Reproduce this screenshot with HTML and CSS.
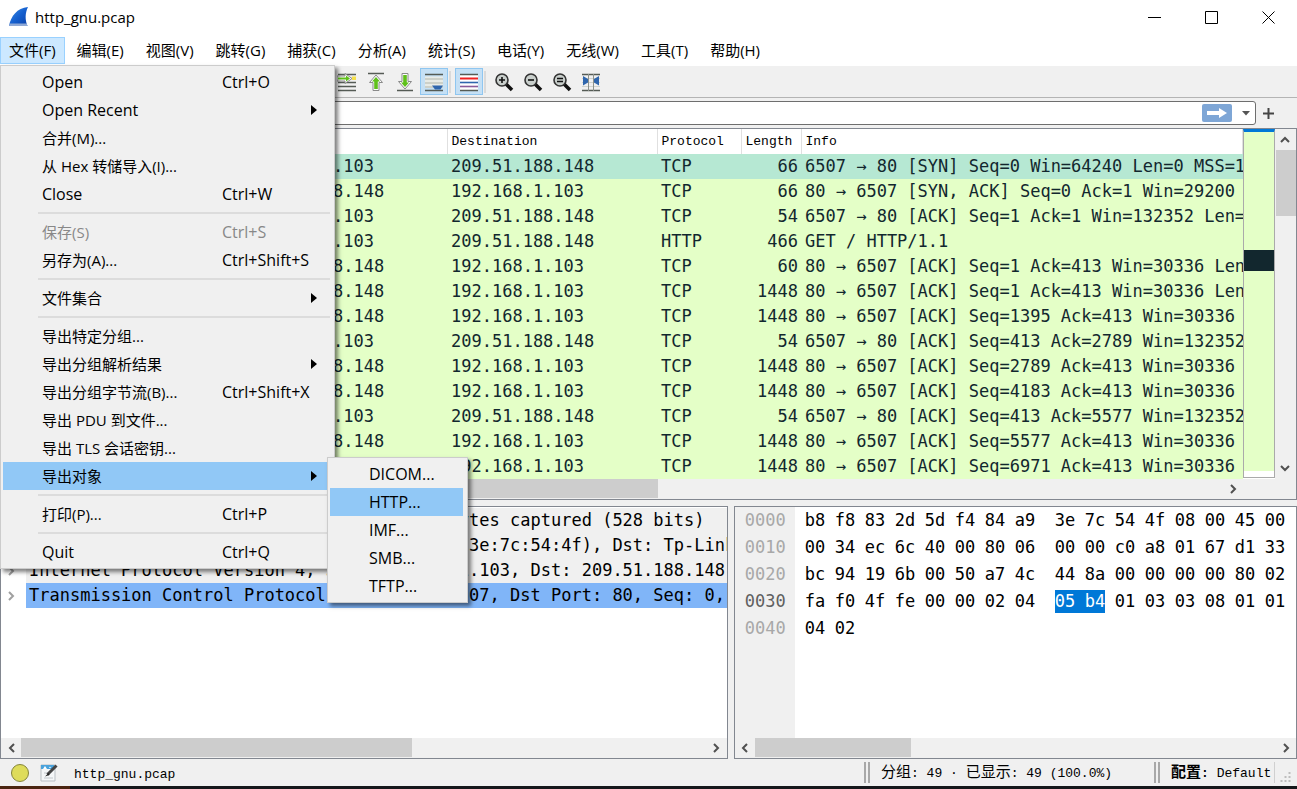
FILE: index.html
```html
<!DOCTYPE html>
<html lang="zh-CN">
  <head>
    <meta charset="UTF-8" />
    <meta name="viewport" content="width=device-width, initial-scale=1.0" />
    <title>http_gnu.pcap</title>
    <link rel="stylesheet" href="styles.css">
  </head>
  <body>
    <header class="titlebar">
      <svg class="logo" width="20" height="20" viewBox="0 0 20 20">
        <defs>
          <linearGradient id="fin" x1="0" y1="0" x2="1" y2="1">
            <stop offset="0" stop-color="#3f8fe6" />
            <stop offset="0.5" stop-color="#1560cf" />
            <stop offset="1" stop-color="#0a3fa6" />
          </linearGradient>
        </defs>
        <path d="M0 19C2 9 8 1 19 0C16 6 16 13 18.500 19Z" fill="url(#fin)" />
        <path d="M0 19C.3 17.500.6 17 1 16.500H17.800L18.500 19Z" fill="#8fa9d6" />
      </svg>
      <h1>http_gnu.pcap</h1>
      <div class="window-buttons">
        <button aria-label="最小化"><svg width="13" height="13" viewBox="0 0 13 13"><path d="M0 6.500H13" /></svg></button>
        <button aria-label="最大化"><svg width="13" height="13" viewBox="0 0 13 13"><path d="M.5.5H12.500V12.500H.5Z" /></svg></button>
        <button aria-label="关闭"><svg width="13" height="13" viewBox="0 0 13 13"><path d="M.5.5L12.500 12.500M12.500.5L.5 12.500" /></svg></button>
      </div>
    </header>

    <nav class="menubar">
      <div class="menu-root">
        <button class="valgt">文件(F)</button>
        <div class="menu">
          <button class="item"><span class="latin">Open</span><kbd>Ctrl+O</kbd></button>
          <button class="item more"><span class="latin">Open Recent</span></button>
          <button class="item"><span>合并(M)...</span></button>
          <button class="item"><span>从 Hex 转储导入(I)...</span></button>
          <button class="item"><span class="latin">Close</span><kbd>Ctrl+W</kbd></button>
          <hr />
          <button class="item" disabled><span>保存(S)</span><kbd>Ctrl+S</kbd></button>
          <button class="item"><span>另存为(A)...</span><kbd>Ctrl+Shift+S</kbd></button>
          <hr />
          <button class="item more"><span>文件集合</span></button>
          <hr />
          <button class="item"><span>导出特定分组...</span></button>
          <button class="item more"><span>导出分组解析结果</span></button>
          <button class="item"><span>导出分组字节流(B)...</span><kbd>Ctrl+Shift+X</kbd></button>
          <button class="item"><span>导出 PDU 到文件...</span></button>
          <button class="item"><span>导出 TLS 会话密钥...</span></button>
          <div class="sub-root">
            <button class="item more active"><span>导出对象</span></button>
            <div class="menu submenu">
              <button class="item latin">DICOM...</button>
              <button class="item latin active">HTTP...</button>
              <button class="item latin">IMF...</button>
              <button class="item latin">SMB...</button>
              <button class="item latin">TFTP...</button>
            </div>
          </div>
          <hr />
          <button class="item"><span>打印(P)...</span><kbd>Ctrl+P</kbd></button>
          <hr />
          <button class="item"><span class="latin">Quit</span><kbd>Ctrl+Q</kbd></button>
        </div>
      </div>
      <button>编辑(E)</button>
      <button>视图(V)</button>
      <button>跳转(G)</button>
      <button>捕获(C)</button>
      <button>分析(A)</button>
      <button>统计(S)</button>
      <button>电话(Y)</button>
      <button>无线(W)</button>
      <button>工具(T)</button>
      <button>帮助(H)</button>
    </nav>

    <div class="toolbar">
      <button aria-label="转到分组">
        <svg width="20" height="20" viewBox="0 0 20 20">
          <path d="M1 2.500H19M1 10.500H19M1 14.500H19M1 18.500H19" stroke="#555b55" stroke-width="1.500" />
          <path d="M15 4.500H19V8H15Z" fill="#f5e04a" />
          <path d="M0 4H8V1.500L15 6.500L8 11.500V9H0Z" fill="#fff" stroke="#8a8a8a" />
          <path d="M1 5.500H9V3.500L13 6.500L9 9.500V7.500H1Z" fill="#5fc01a" />
        </svg>
      </button>
      <button aria-label="首个分组">
        <svg width="18" height="20" viewBox="0 0 18 20">
          <path d="M1 1.500H17" stroke="#555b55" stroke-width="1.500" />
          <path d="M9 3L15.500 10.500H12V18.500H6V10.500H2.500Z" fill="#fff" stroke="#8a8a8a" />
          <path d="M9 5L13 9.500H10.800V17H7.200V9.500H5Z" fill="#5fc01a" />
        </svg>
      </button>
      <button aria-label="最新分组">
        <svg width="18" height="20" viewBox="0 0 18 20">
          <path d="M1 18.500H17" stroke="#555b55" stroke-width="1.500" />
          <path d="M9 17L15.500 9.500H12V1.500H6V9.500H2.500Z" fill="#fff" stroke="#8a8a8a" />
          <path d="M9 15L13 10.500H10.800V3H7.200V10.500H5Z" fill="#5fc01a" />
        </svg>
      </button>
      <button class="pressed" aria-label="自动滚动">
        <svg width="18" height="20" viewBox="0 0 18 20">
          <path d="M0 4.500H18V16H0Z" fill="#e8ebe6" />
          <path d="M0 7H18M0 11H18M0 15H18" stroke="#c2c8c0" stroke-width="1.500" />
          <path d="M0 2.500H18M0 18.500H18" stroke="#555b55" stroke-width="1.500" />
          <path d="M7 13.500H18L15.500 17.500H10Z" fill="#2f66ad" />
        </svg>
      </button>
      <span class="divider"></span>
      <button class="pressed" aria-label="着色">
        <svg width="18" height="20" viewBox="0 0 18 20">
          <path d="M0 3H18V18H0Z" fill="#fff" />
          <path d="M0 2.500H18M0 18.500H18" stroke="#555b55" stroke-width="1.600" />
          <path d="M0 6.500H18" stroke="#ee2222" stroke-width="2" />
          <path d="M0 10.500H18" stroke="#2f66ad" stroke-width="1.600" />
          <path d="M0 14.500H18" stroke="#8a5a9a" stroke-width="1.600" />
        </svg>
      </button>
      <span class="divider"></span>
      <button aria-label="放大">
        <svg width="20" height="20" viewBox="0 0 20 20">
          <path d="M12 12L18 18" stroke="#111" stroke-width="3.600" />
          <circle cx="8" cy="8" r="6" fill="#c9cfcc" stroke="#333" stroke-width="1.600" />
          <path d="M5 8H11M8 5V11" stroke="#111" stroke-width="1.600" />
        </svg>
      </button>
      <button aria-label="缩小">
        <svg width="20" height="20" viewBox="0 0 20 20">
          <path d="M12 12L18 18" stroke="#111" stroke-width="3.600" />
          <circle cx="8" cy="8" r="6" fill="#c9cfcc" stroke="#333" stroke-width="1.600" />
          <path d="M5 8H11" stroke="#111" stroke-width="1.600" />
        </svg>
      </button>
      <button aria-label="普通大小">
        <svg width="20" height="20" viewBox="0 0 20 20">
          <path d="M12 12L18 18" stroke="#111" stroke-width="3.600" />
          <circle cx="8" cy="8" r="6" fill="#c9cfcc" stroke="#333" stroke-width="1.600" />
          <path d="M5 6.500H11M5 9.500H11" stroke="#111" stroke-width="1.500" />
        </svg>
      </button>
      <button aria-label="调整列宽">
        <svg width="18" height="20" viewBox="0 0 18 20">
          <path d="M0 6.500H18M0 10.500H18M0 14.500H18" stroke="#d0d3ce" />
          <path d="M0 2.500H18M0 18.500H18" stroke="#555b55" stroke-width="1.600" />
          <path d="M6.500 2V19M11.500 2V19" stroke="#8d928d" />
          <path d="M1 4L6 7V10.500L1 13.500ZM17 4L12 7V10.500L17 13.500Z" fill="#2f66ad" />
        </svg>
      </button>
    </div>

    <div class="filterbar">
      <div class="filter">
        <input type="text" aria-label="显示过滤器" />
        <button class="apply" aria-label="应用">
          <svg width="22" height="12" viewBox="0 0 22 12"><path d="M1 4H13V1L21 6L13 11V8H1Z" fill="#fff" /></svg>
        </button>
        <button class="recent" aria-label="最近">
          <svg width="8" height="5" viewBox="0 0 8 5"><path d="M0 0H8L4 4.500Z" fill="#555" /></svg>
        </button>
      </div>
      <button class="add" aria-label="添加按钮">
        <svg width="11" height="11" viewBox="0 0 11 11"><path d="M0 5.500H11M5.500 0V11" stroke="#444" stroke-width="2" /></svg>
      </button>
    </div>

    <main>
      <section class="packets">
        <div class="packet-area">
          <div class="packet-list">
            <table>
              <colgroup>
                <col class="c-no"><col class="c-time"><col class="c-address"><col class="c-address"><col class="c-protocol"><col class="c-length"><col>
              </colgroup>
              <thead>
                <tr><th>No.</th><th>Time</th><th>Source</th><th>Destination</th><th>Protocol</th><th>Length</th><th>Info</th></tr>
              </thead>
              <tbody>
                <tr class="current"><td>1</td><td></td><td>192.168.1.103</td><td>209.51.188.148</td><td>TCP</td><td>66</td><td>6507 → 80 [SYN] Seq=0 Win=64240 Len=0 MSS=1460</td></tr>
                <tr><td>2</td><td></td><td>209.51.188.148</td><td>192.168.1.103</td><td>TCP</td><td>66</td><td>80 → 6507 [SYN, ACK] Seq=0 Ack=1 Win=29200 Len=0</td></tr>
                <tr><td>3</td><td></td><td>192.168.1.103</td><td>209.51.188.148</td><td>TCP</td><td>54</td><td>6507 → 80 [ACK] Seq=1 Ack=1 Win=132352 Len=0</td></tr>
                <tr><td>4</td><td></td><td>192.168.1.103</td><td>209.51.188.148</td><td>HTTP</td><td>466</td><td>GET / HTTP/1.1</td></tr>
                <tr><td>5</td><td></td><td>209.51.188.148</td><td>192.168.1.103</td><td>TCP</td><td>60</td><td>80 → 6507 [ACK] Seq=1 Ack=413 Win=30336 Len=0</td></tr>
                <tr><td>6</td><td></td><td>209.51.188.148</td><td>192.168.1.103</td><td>TCP</td><td>1448</td><td>80 → 6507 [ACK] Seq=1 Ack=413 Win=30336 Len=1394</td></tr>
                <tr><td>7</td><td></td><td>209.51.188.148</td><td>192.168.1.103</td><td>TCP</td><td>1448</td><td>80 → 6507 [ACK] Seq=1395 Ack=413 Win=30336 Len=1394</td></tr>
                <tr><td>8</td><td></td><td>192.168.1.103</td><td>209.51.188.148</td><td>TCP</td><td>54</td><td>6507 → 80 [ACK] Seq=413 Ack=2789 Win=132352 Len=0</td></tr>
                <tr><td>9</td><td></td><td>209.51.188.148</td><td>192.168.1.103</td><td>TCP</td><td>1448</td><td>80 → 6507 [ACK] Seq=2789 Ack=413 Win=30336 Len=1394</td></tr>
                <tr><td>10</td><td></td><td>209.51.188.148</td><td>192.168.1.103</td><td>TCP</td><td>1448</td><td>80 → 6507 [ACK] Seq=4183 Ack=413 Win=30336 Len=1394</td></tr>
                <tr><td>11</td><td></td><td>192.168.1.103</td><td>209.51.188.148</td><td>TCP</td><td>54</td><td>6507 → 80 [ACK] Seq=413 Ack=5577 Win=132352 Len=0</td></tr>
                <tr><td>12</td><td></td><td>209.51.188.148</td><td>192.168.1.103</td><td>TCP</td><td>1448</td><td>80 → 6507 [ACK] Seq=5577 Ack=413 Win=30336 Len=1394</td></tr>
                <tr><td>13</td><td></td><td>209.51.188.148</td><td>192.168.1.103</td><td>TCP</td><td>1448</td><td>80 → 6507 [ACK] Seq=6971 Ack=413 Win=30336 Len=1394</td></tr>
              </tbody>
            </table>
          </div>
          <div class="minimap"><div class="minimap-mark"></div></div>
          <div class="scroll-y">
            <button aria-label="向上"><svg width="10" height="7" viewBox="0 0 10 7"><path d="M1 6L5 2L9 6" /></svg></button>
            <div class="track"><div class="thumb"></div></div>
            <button aria-label="向下"><svg width="10" height="7" viewBox="0 0 10 7"><path d="M1 1L5 5L9 1" /></svg></button>
          </div>
        </div>
        <div class="scroll-x scroll-packets">
          <button aria-label="向左"><svg width="7" height="10" viewBox="0 0 7 10"><path d="M6 1L2 5L6 9" /></svg></button>
          <div class="track"><div class="thumb"></div></div>
          <button aria-label="向右"><svg width="7" height="10" viewBox="0 0 7 10"><path d="M1 1L5 5L1 9" /></svg></button>
        </div>
      </section>

      <div class="panes">
        <section class="details">
          <ul>
            <li><svg width="7" height="10" viewBox="0 0 7 10"><path d="M1 1L5 5L1 9" /></svg><span>Frame 1: 66 bytes on wire (528 bits), 66 bytes captured (528 bits)</span></li>
            <li><svg width="7" height="10" viewBox="0 0 7 10"><path d="M1 1L5 5L1 9" /></svg><span>Ethernet II, Src: LCFCHeFe_7c:54:4f (84:a9:3e:7c:54:4f), Dst: Tp-LinkT</span></li>
            <li><svg width="7" height="10" viewBox="0 0 7 10"><path d="M1 1L5 5L1 9" /></svg><span>Internet Protocol Version 4, Src: 192.168.1.103, Dst: 209.51.188.148</span></li>
            <li class="current"><svg width="7" height="10" viewBox="0 0 7 10"><path d="M1 1L5 5L1 9" /></svg><span>Transmission Control Protocol, Src Port: 6507, Dst Port: 80, Seq: 0, Len: 0</span></li>
          </ul>
          <div class="scroll-x scroll-details">
            <button aria-label="向左"><svg width="7" height="10" viewBox="0 0 7 10"><path d="M6 1L2 5L6 9" /></svg></button>
            <div class="track"><div class="thumb"></div></div>
            <button aria-label="向右"><svg width="7" height="10" viewBox="0 0 7 10"><path d="M1 1L5 5L1 9" /></svg></button>
          </div>
        </section>

        <section class="bytes">
          <div class="hex">
            <table>
              <tr><th>0000</th><td>b8</td><td>f8</td><td>83</td><td>2d</td><td>5d</td><td>f4</td><td>84</td><td>a9</td><td>3e</td><td>7c</td><td>54</td><td>4f</td><td>08</td><td>00</td><td>45</td><td>00</td></tr>
              <tr><th>0010</th><td>00</td><td>34</td><td>ec</td><td>6c</td><td>40</td><td>00</td><td>80</td><td>06</td><td>00</td><td>00</td><td>c0</td><td>a8</td><td>01</td><td>67</td><td>d1</td><td>33</td></tr>
              <tr><th>0020</th><td>bc</td><td>94</td><td>19</td><td>6b</td><td>00</td><td>50</td><td>a7</td><td>4c</td><td>44</td><td>8a</td><td>00</td><td>00</td><td>00</td><td>00</td><td>80</td><td>02</td></tr>
              <tr class="current"><th>0030</th><td>fa</td><td>f0</td><td>4f</td><td>fe</td><td>00</td><td>00</td><td>02</td><td>04</td><td><mark class="joined">05</mark></td><td><mark>b4</mark></td><td>01</td><td>03</td><td>03</td><td>08</td><td>01</td><td>01</td></tr>
              <tr><th>0040</th><td>04</td><td>02</td></tr>
            </table>
          </div>
          <div class="scroll-x scroll-bytes">
            <button aria-label="向左"><svg width="7" height="10" viewBox="0 0 7 10"><path d="M6 1L2 5L6 9" /></svg></button>
            <div class="track"><div class="thumb"></div></div>
            <button aria-label="向右"><svg width="7" height="10" viewBox="0 0 7 10"><path d="M1 1L5 5L1 9" /></svg></button>
          </div>
        </section>
      </div>
    </main>

    <footer>
      <div class="status-file">
        <button class="expert" aria-label="专家信息"></button>
        <button aria-label="文件属性">
          <svg width="18" height="18" viewBox="0 0 18 18">
            <path d="M1 1H15V17H1Z" fill="#f4f6f7" stroke="#b9bfc3" />
            <path d="M1 1H14V5H1Z" fill="#4aa3dc" />
            <path d="M3 5L5 2L7 5M9 4L10 2.500L11 4" fill="#fff" />
            <path d="M4 9H8M4 14H13" stroke="#c2c8cc" />
            <path d="M16.500 1.500L7.500 10.500" stroke="#444" stroke-width="3" />
            <path d="M8.500 9L5 12.500L9.500 11Z" fill="#222" />
          </svg>
        </button>
        <span>http_gnu.pcap</span>
      </div>
      <div class="status-part status-packets"><span class="cjk">分组</span>: 49 · <span class="cjk">已显示</span>: 49 (100.0%)</div>
      <div class="status-part status-profile"><b class="cjk">配置</b><b>: </b>Default</div>
      <svg class="grip" width="13" height="13" viewBox="0 0 13 13">
        <path d="M9 1H11V3H9ZM5 5H7V7H5ZM9 5H11V7H9ZM1 9H3V11H1ZM5 9H7V11H5ZM9 9H11V11H9Z" fill="#bdbdbd" />
      </svg>
    </footer>
    <div class="taskbar"></div>
  </body>
</html>
```

FILE: styles.css
```css
* {
  padding: 0;
  margin: 0;
  box-sizing: border-box;
}

body {
  display: flex;
  flex-direction: column;
  height: 100vh;
  overflow: hidden;
  background-color: #f0f0f0;
  color: #000;
  font-family: "Open Sans", "Noto Sans CJK SC", sans-serif;
  font-size: 15px;
}

button {
  border: none;
  background: none;
  color: inherit;
  font: inherit;
}

svg {
  display: block;
  fill: none;
}

/* titlebar */

.titlebar {
  display: flex;
  align-items: center;
  height: 37px;
  padding: 0 0 3px 9px;
  background-color: #fff;
}

h1 {
  flex: 1;
  margin-left: 6px;
  font-size: 15px;
  font-weight: 400;
}

.window-buttons {
  display: flex;
}

.window-buttons button {
  display: grid;
  place-items: center;
  width: 57px;
  height: 34px;
}

.window-buttons svg {
  stroke: #000;
}

/* menubar */

.menubar {
  display: flex;
  gap: 2px;
  height: 29px;
  background-color: #fff;
}

.menubar > button,
.menu-root > button {
  height: 27px;
  padding: 0 9px;
  border: 1px solid transparent;
  line-height: 25px;
  white-space: nowrap;
}

.menu-root,
.sub-root {
  position: relative;
}

.menu-root > .valgt {
  padding: 0 8px;
  background-color: #cce8ff;
  border-color: #99d1ff;
}

.menu {
  position: absolute;
  z-index: 2;
  top: 28px;
  left: 0;
  width: 335px;
  padding: 2px 4px 2px 2px;
  border: 1px solid #ccc;
  background-color: #f0f0f0;
  box-shadow: 3px 3px 4px rgba(0, 0, 0, 0.5);
}

.menu .item {
  display: flex;
  align-items: center;
  position: relative;
  width: 100%;
  height: 28px;
  padding-left: 39px;
  line-height: 28px;
  text-align: left;
  white-space: nowrap;
}

.item span {
  width: 180px;
}

.item kbd {
  font-family: inherit;
}

.item kbd,
.latin {
  font-size: 16px;
}

.item:disabled {
  color: #888;
}

.item.active {
  background-color: #91c8f6;
}

.more::after {
  content: "";
  margin-left: 89px;
  border: 5px solid transparent;
  border-left: 6px solid #000;
  border-right: none;
}

.menu hr {
  height: 2px;
  margin: 4px 0 4px 35px;
  border: none;
  background-color: #dcdcdc;
}

.submenu {
  z-index: 3;
  top: -5px;
  left: 324px;
  width: 141px;
}

/* toolbar */

.toolbar {
  display: flex;
  align-items: center;
  gap: 1px;
  height: 32px;
  padding-left: 333px;
  border-bottom: 1px solid #b4b4b4;
}

.toolbar button {
  display: grid;
  place-items: center;
  width: 28px;
  height: 27px;
}

.toolbar .pressed {
  background-color: #c5e0f5;
  border: 1px solid #8fc6f0;
}

.divider {
  width: 5px;
  height: 22px;
  border-left: 2px solid #dadada;
}

/* display filter */

.filterbar {
  display: flex;
  align-items: center;
  height: 30px;
  padding-left: 30px;
}

.filter {
  display: flex;
  align-items: center;
  flex: 1;
  height: 24px;
  border: 1px solid #6e6e6e;
  border-radius: 3px;
  background-color: #fff;
}

.filter input {
  flex: 1;
  min-width: 0;
  height: 20px;
  border: none;
  outline: none;
  font: inherit;
}

.apply {
  display: grid;
  place-items: center;
  width: 30px;
  height: 18px;
  border-radius: 2px;
  background-color: #7ea6d6;
}

.recent {
  display: grid;
  place-items: center;
  width: 23px;
  padding-left: 5px;
}

.add {
  display: grid;
  place-items: center;
  width: 41px;
  height: 24px;
  padding-right: 16px;
}

/* main panes */

main {
  display: flex;
  flex-direction: column;
  flex: 1;
  min-height: 0;
  gap: 6px;
}

.packets,
.details,
.bytes {
  border: 1px solid #828790;
  background-color: #fff;
}

.packet-area {
  display: flex;
  height: 350px;
}

.packet-list {
  flex: 1;
  min-width: 0;
  overflow: hidden;
}

table {
  border-collapse: collapse;
}

.packet-list table {
  width: 100%;
  table-layout: fixed;
}

.c-no {
  width: 70px;
}

.c-time {
  width: 166px;
}

.c-address {
  width: 210px;
}

.c-protocol {
  width: 84px;
}

.c-length {
  width: 60px;
}

.packet-list th {
  height: 25px;
  padding-left: 4px;
  border-right: 1px solid #e0e0e0;
  font-family: "Liberation Mono", monospace;
  font-size: 13px;
  font-weight: 400;
  text-align: left;
}

.packet-list td {
  height: 25px;
  padding-left: 4px;
  overflow: hidden;
  font-family: "DejaVu Sans Mono", monospace;
  font-size: 17px;
  line-height: 25px;
  white-space: nowrap;
}

.packet-list td:nth-child(6) {
  padding: 0 3px 0 0;
  text-align: right;
}

.packet-list tbody {
  background-color: #e4ffc7;
  color: #12272e;
}

.packet-list .current {
  background-color: #b6e8d3;
}

.minimap {
  width: 32px;
  height: 349px;
  padding-top: 118px;
  border: 1px solid #aaa;
  border-top: 3px solid #0078d7;
  border-bottom: 1px solid #aaa;
  background-color: #e4ffc7;
  box-shadow: inset 0 -6px #fff;
}

.minimap-mark {
  height: 21px;
  background-color: #12272e;
}

/* scrollbars */

.scroll-x,
.scroll-y {
  display: flex;
  background-color: #f0f0f0;
}

.scroll-x {
  height: 20px;
}

.scroll-y {
  flex-direction: column;
  width: 21px;
}

.scroll-x button,
.scroll-y button {
  display: grid;
  place-items: center;
  width: 20px;
  height: 21px;
}

.scroll-x button {
  height: 20px;
}

.scroll-x svg,
.scroll-y svg {
  stroke: #505050;
  stroke-width: 2;
}

.track {
  flex: 1;
}

.thumb {
  background-color: #cdcdcd;
}

.scroll-x .thumb {
  height: 19px;
}

.scroll-y .thumb {
  height: 66px;
  margin-left: 1px;
}

.scroll-packets {
  padding-right: 53px;
}

.scroll-packets .thumb {
  width: 53%;
}

.scroll-details .thumb {
  width: 57%;
}

.scroll-bytes .thumb {
  width: 30%;
}

/* details and bytes */

.panes {
  display: flex;
  flex: 1;
  min-height: 0;
  gap: 6px;
}

.details,
.bytes {
  display: flex;
  flex-direction: column;
}

.details {
  flex: 728;
  min-width: 0;
}

.bytes {
  flex: 563;
  min-width: 0;
}

.details ul {
  flex: 1;
  overflow: hidden;
  padding-top: 1px;
  list-style: none;
}

.details li {
  display: flex;
  align-items: center;
  height: 25px;
  padding-left: 7px;
}

.details li svg {
  flex: none;
  stroke: #a0a0a0;
  stroke-width: 2;
}

.details li span {
  flex: 1;
  margin-left: 11px;
  padding-left: 3px;
  overflow: hidden;
  background-color: #f0f0f0;
  font-family: "DejaVu Sans Mono", monospace;
  font-size: 17px;
  line-height: 25px;
  white-space: nowrap;
}

.details .current span {
  background-color: #80b5f8;
}

.hex {
  flex: 1;
  overflow: hidden;
  background: linear-gradient(to right, #f0f0f0 60px, #fff 60px);
}

.hex th,
.hex td {
  height: 27px;
  font-family: "DejaVu Sans Mono", monospace;
  font-size: 17px;
  font-weight: 400;
  line-height: 27px;
  text-align: left;
}

.hex th {
  width: 70px;
  min-width: 70px;
  padding-left: 10px;
  color: #a8a8a8;
}

.hex .current th {
  color: #606060;
}

.hex td {
  width: 30px;
  min-width: 30px;
}

.hex td:nth-child(9) {
  width: 40px;
  min-width: 40px;
}

mark {
  display: block;
  width: 20px;
  height: 23px;
  background-color: #0078d7;
  color: #fff;
  line-height: 23px;
}

.joined {
  width: 30px;
}

/* statusbar */

footer {
  display: flex;
  align-items: center;
  height: 27px;
  font-family: "Liberation Mono", "Noto Sans CJK SC", monospace;
  font-size: 13px;
}

.cjk {
  font-size: 15px;
}

.status-file {
  display: flex;
  align-items: center;
  flex: 1;
  gap: 11px;
  padding-left: 11px;
}

.status-file span {
  margin-left: 5px;
  padding-top: 4px;
}

.expert {
  width: 18px;
  height: 18px;
  border: 1px solid #85853c;
  border-radius: 50%;
  background-color: #dedc5a;
}

.status-part {
  height: 21px;
  padding: 2px 0 0 11px;
  border-left: 6px double #a8a8a8;
  line-height: 20px;
  white-space: pre;
}

.status-packets {
  width: 290px;
}

.status-profile {
  width: 121px;
  border-right: 1px solid #d0d0d0;
}

.grip {
  width: 22px;
  margin-top: 10px;
}

.taskbar {
  height: 3px;
  background: linear-gradient(to right, #4a2410 70px, #15171a 70px);
}
```
